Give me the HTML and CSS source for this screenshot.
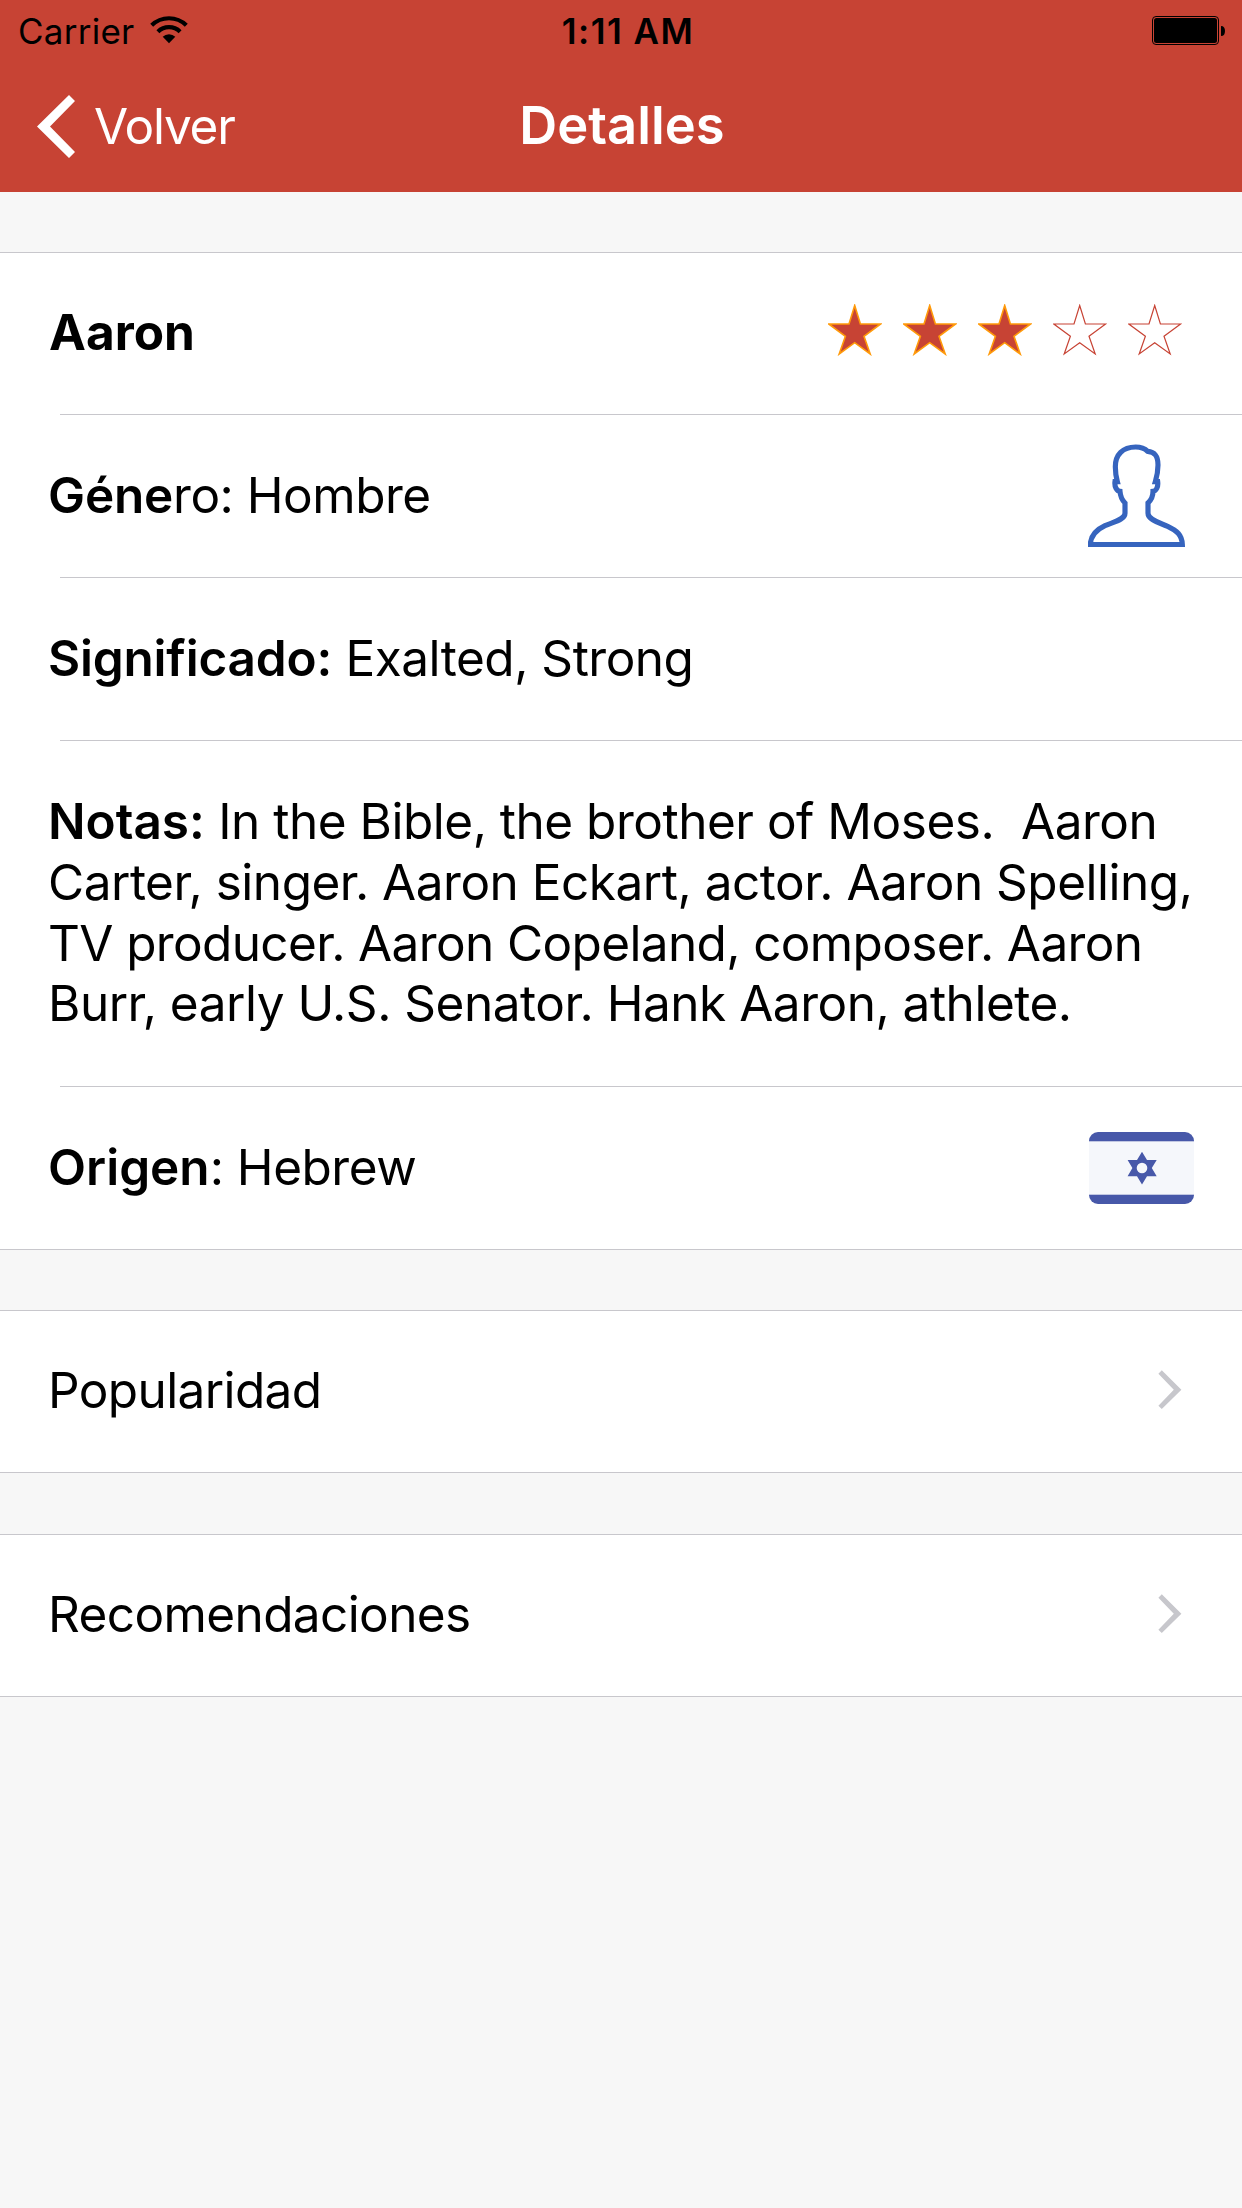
FILE: index.html
```
<!DOCTYPE html>
<html lang="es">
<head>
<meta charset="utf-8">
<title>Detalles</title>
<link rel="stylesheet" href="styles.css">
</head>
<body>
<svg class="symbols" aria-hidden="true">
  <symbol id="star" viewBox="0 0 54 52">
    <polygon points="26.7,1.5 32.4,20 52.6,20 36,32.3 42.2,50 26.7,38.7 11.2,50 17.4,32.3 0.8,20 21,20"/>
  </symbol>
  <symbol id="chevron" viewBox="0 0 24 40">
    <polygon points="3.8,0.3 0.4,3.7 15.8,19.7 0.4,35.7 3.8,39.1 23.4,19.7"/>
  </symbol>
</svg>

<header class="header">
  <div class="status">
    <div class="carrier">
      <span>Carrier</span>
      <svg class="wifi" width="38" height="28" viewBox="0 0 38 28">
        <path d="M1.7 9.3A24.8 24.8 0 0 1 36.3 9.3M7.9 15.7A16 16 0 0 1 30.1 15.7" fill="none" stroke="#000" stroke-width="4.2"/>
        <path d="M19 27.2L12.7 20.8A9 9 0 0 1 25.3 20.8Z"/>
      </svg>
    </div>
    <span class="time">1:11 AM</span>
    <svg class="battery" width="73" height="29" viewBox="0 0 73 29">
      <rect x="0.5" y="0.5" width="66" height="28" rx="3.5" fill="none" stroke="#000"/>
      <rect x="2" y="2" width="63" height="25" rx="2.5"/>
      <path d="M69 10C71.8 10 73 12 73 15S71.8 20 69 20Z"/>
    </svg>
  </div>
  <nav class="nav">
    <a class="back">
      <svg width="38" height="63" viewBox="0 0 38 63"><polygon points="32,0 38,6 13,31.5 38,57 32,63 0,31.5" fill="#fff"/></svg>
      <span>Volver</span>
    </a>
    <h1 class="title">Detalles</h1>
  </nav>
</header>

<main>
  <section class="group">
    <div class="row row-first">
      <span class="text name">Aaron</span>
      <div class="stars">
        <svg class="star full"><use href="#star"/></svg>
        <svg class="star full"><use href="#star"/></svg>
        <svg class="star full"><use href="#star"/></svg>
        <svg class="star"><use href="#star"/></svg>
        <svg class="star"><use href="#star"/></svg>
      </div>
    </div>
    <hr class="divider">
    <div class="row">
      <span class="text"><b class="gender-label">Géne</b>ro: Hombre</span>
      <svg class="person" width="97" height="105" viewBox="54 68 291 315">
        <path d="M61 372.500H337C336 344 321 331 293 318C265 306 234 298 234 279V248C243 240 249 226 249 213C259 212 265 199 263 184H256C262 164 264 149 264 134C264 106 254 95 233 93C223 83 211 80 197 80C158 80 136 103 136 139C136 155 138 169 142 184H135C133 199 140 212 150 213C151 226 156 239 165 248V279C165 298 133 304 105 316C77 329 62 345 61 372.500Z" fill="none" stroke="#3664be" stroke-width="15.500"/>
      </svg>
    </div>
    <hr class="divider">
    <div class="row">
      <span class="text"><b class="meaning-label">Significado:</b> Exalted, Strong</span>
    </div>
    <hr class="divider">
    <div class="row row-notes">
      <p class="text notes">
        <span class="line"><b>Notas:</b> In the Bible, the brother of Moses.&nbsp; Aaron</span>
        <span class="line">Carter, singer. Aaron Eckart, actor. Aaron Spelling,</span>
        <span class="line line-tight">TV producer. Aaron Copeland, composer. Aaron</span>
        <span class="line">Burr, early U.S. Senator. Hank Aaron, athlete.</span>
      </p>
    </div>
    <hr class="divider">
    <div class="row">
      <span class="text"><b>Origen</b>: Hebrew</span>
      <svg class="flag" width="105" height="72" viewBox="0 0 105 72">
        <rect width="105" height="72" rx="9" fill="#4758a9"/>
        <rect y="9.300" width="105" height="53.400" fill="#f5f7fb"/>
        <path d="M53 19.700L58 28H67.700L62.800 36L67.700 44.200H58L53 52.500L48 44.200H38.600L43.400 36L38.600 28H48Z" fill="#4758a9"/>
        <circle cx="53" cy="36" r="5.300" fill="#f5f7fb"/>
      </svg>
    </div>
  </section>

  <section class="group">
    <a class="row row-first">
      <span class="text link">Popularidad</span>
      <svg class="chevron"><use href="#chevron"/></svg>
    </a>
  </section>

  <section class="group group-last">
    <a class="row row-first">
      <span class="text link">Recomendaciones</span>
      <svg class="chevron"><use href="#chevron"/></svg>
    </a>
  </section>
</main>
</body>
</html>
```
FILE: styles.css
```
* {
  box-sizing: border-box;
}

body {
  margin: 0;
  min-height: 2208px;
  background: #f7f7f7;
  color: #000;
  font-family: Inter, "Liberation Sans", sans-serif;
}

.symbols {
  display: none;
}

svg {
  display: block;
  flex: none;
}

.header {
  height: 192px;
  background: #c74334;
}

.status {
  display: grid;
  grid-template-columns: 1fr auto 1fr;
  align-items: center;
  height: 60px;
  padding: 2px 17px 0 18px;
  font-size: 35px;
  line-height: 42px;
}

.carrier {
  display: flex;
  align-items: center;
  letter-spacing: 0.25px;
}

.wifi {
  margin: 0 0 3px 16px;
}

.time {
  padding-left: 13px;
  font-weight: 600;
  letter-spacing: 1.5px;
}

.battery {
  justify-self: end;
  margin-bottom: 2px;
}

.nav {
  display: grid;
  grid-template-columns: 1fr auto 1fr;
  align-items: center;
  height: 132px;
  padding: 0 37px;
  color: #fff;
}

.back {
  display: flex;
  align-items: center;
  gap: 19px;
  font-size: 49.5px;
  letter-spacing: -1.2px;
}

.title {
  margin: 0;
  padding: 0 0 2px 2px;
  font-size: 52.5px;
  font-weight: 600;
  line-height: 62px;
}

.group {
  margin-top: 60px;
  border-top: 1px solid #c8c7cc;
  border-bottom: 1px solid #c8c7cc;
  background: #fff;
}

.group-last {
  margin-top: 61px;
}

.row {
  display: flex;
  align-items: center;
  justify-content: space-between;
  height: 162px;
  padding: 0 48px;
}

.row-first {
  height: 161px;
  padding-right: 60px;
}

.row-notes {
  height: 345px;
  padding-right: 0;
}

.divider {
  height: 1px;
  margin: 0 0 0 60px;
  border: 0;
  background: #c8c7cc;
}

.text {
  margin: 0;
  padding-bottom: 2px;
  font-size: 49.5px;
  line-height: 60.67px;
  letter-spacing: -0.49px;
  white-space: nowrap;
}

.text b {
  font-weight: 600;
  letter-spacing: 0;
}

.text .gender-label {
  letter-spacing: -0.2px;
}

.text .meaning-label {
  letter-spacing: -0.2px;
}

.name {
  padding: 0 0 3px 1px;
  font-weight: 700;
  letter-spacing: 0;
}

.link {
  padding-bottom: 3px;
  letter-spacing: -0.61px;
}

.line {
  display: block;
}

.line-tight {
  letter-spacing: -0.63px;
}

.stars {
  display: flex;
  gap: 21px;
  margin-bottom: 7px;
}

.star {
  width: 54px;
  height: 52px;
  fill: none;
  stroke: #c74334;
  stroke-width: 1.2px;
}

.full {
  fill: #c74334;
  stroke: #ff9a0a;
  stroke-width: 1.6px;
}

.person {
  margin: 0 9px 2px 0;
}

.chevron {
  width: 24px;
  height: 40px;
  margin-bottom: 3px;
  fill: #c7c7cc;
}
```
